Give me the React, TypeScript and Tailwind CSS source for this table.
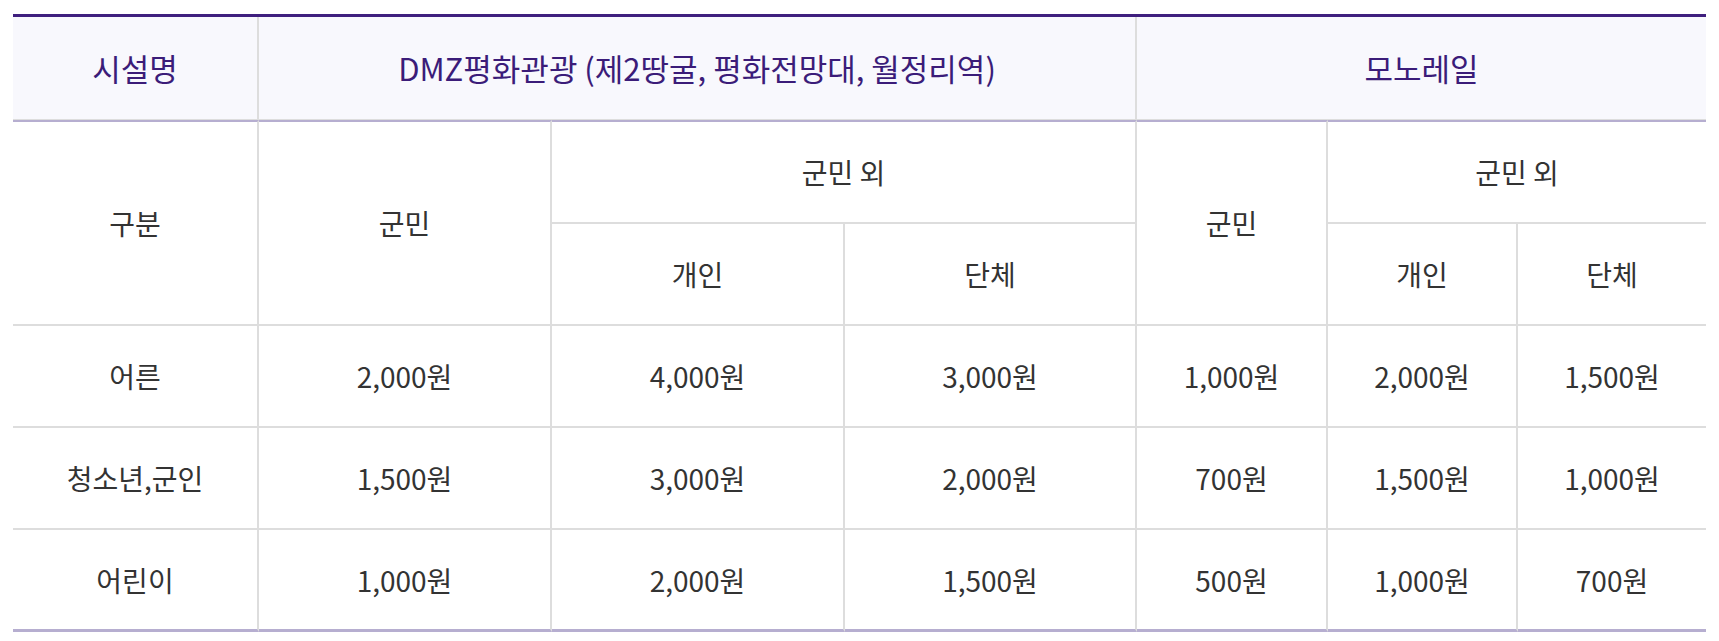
const cell = "flex items-center justify-center border-[#dddddd]"
const head = "bg-[#f8f8fd] text-[#3b1c79] text-[31px]"

const rows = [
  ["어른", "2,000원", "4,000원", "3,000원", "1,000원", "2,000원", "1,500원"],
  ["청소년,군인", "1,500원", "3,000원", "2,000원", "700원", "1,500원", "1,000원"],
  ["어린이", "1,000원", "2,000원", "1,500원", "500원", "1,000원", "700원"],
]

export default function App() {
  return (
    <div
      className="w-full bg-white px-[13px] pt-[14px]"
      style={{ fontFamily: '"Noto Sans CJK KR", "Noto Sans", sans-serif' }}
    >
      <div className="grid grid-cols-[246px_293px_293px_292px_191px_190px_188px] grid-rows-[103px_104px_102px_102px_102px_102px] border-t-[3px] border-[#3f1f7e] text-[28px] text-[#333333]">
        {/* header */}
        <div className={`${cell} ${head} border-r-2 border-b`}>시설명</div>
        <div className={`${cell} ${head} col-span-3 border-r-2 border-b`}>
          DMZ평화관광 (제2땅굴, 평화전망대, 월정리역)
        </div>
        <div className={`${cell} ${head} col-span-3 border-b`}>모노레일</div>

        {/* sub header */}
        <div className={`${cell} row-span-2 border-r-2 border-b-2 border-t-2 border-t-[#b6aed0]`}>구분</div>
        <div className={`${cell} row-span-2 border-r-2 border-b-2 border-t-2 border-t-[#b6aed0]`}>군민</div>
        <div className={`${cell} col-span-2 border-r-2 border-b-2 border-t-2 border-t-[#b6aed0]`}>군민 외</div>
        <div className={`${cell} row-span-2 border-r-2 border-b-2 border-t-2 border-t-[#b6aed0]`}>군민</div>
        <div className={`${cell} col-span-2 border-b-2 border-t-2 border-t-[#b6aed0]`}>군민 외</div>

        <div className={`${cell} border-r-2 border-b-2`}>개인</div>
        <div className={`${cell} border-r-2 border-b-2`}>단체</div>
        <div className={`${cell} border-r-2 border-b-2`}>개인</div>
        <div className={`${cell} border-b-2`}>단체</div>

        {rows.map((row, ri) =>
          row.map((v, ci) => {
            const last = ri === rows.length - 1
            const border = last ? "border-b-[3px] border-b-[#b6aed0]" : "border-b-2"
            return (
              <div key={`${ri}-${ci}`} className={`${cell} ${ci < 6 ? "border-r-2" : ""} ${border}`}>
                {v}
              </div>
            )
          })
        )}
      </div>
    </div>
  )
}
